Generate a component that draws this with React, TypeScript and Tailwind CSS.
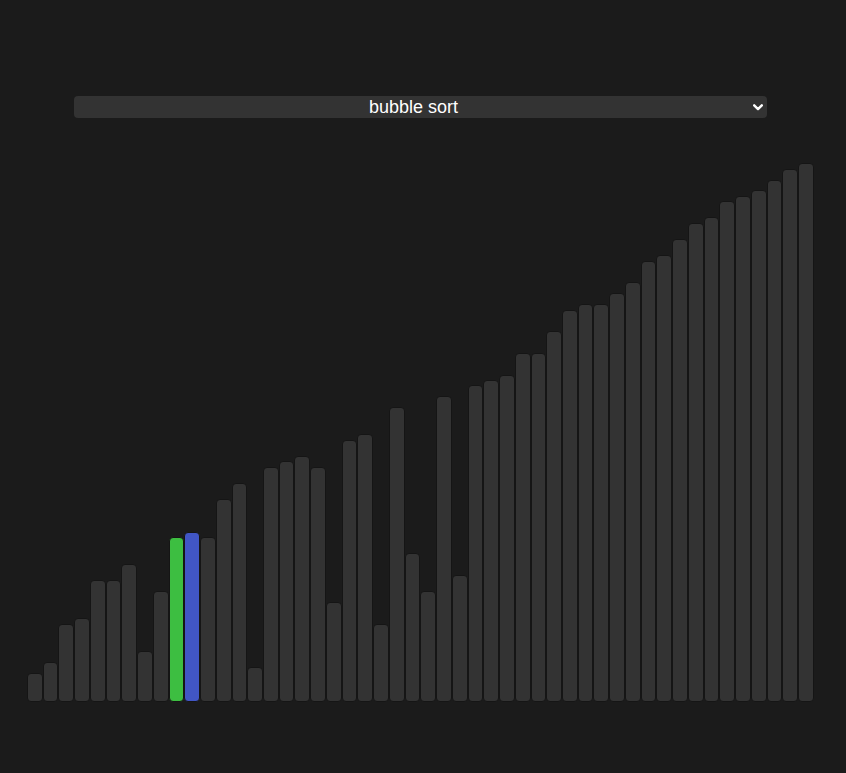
import React from 'react';

const heights = [
  27, 38, 76, 82, 120, 120, 136, 49, 109, 163,
  168, 163, 201, 217, 33, 233, 239, 244, 233, 98,
  260, 266, 76, 293, 147, 109, 304, 125, 315, 320,
  325, 347, 347, 369, 390, 396, 396, 407, 418, 439,
  445, 461, 477, 483, 499, 504, 510, 520, 531, 537,
];

// index 9 is being compared (green), index 10 is the current pivot (blue)
const barColor = (i: number) => {
  if (i === 9) return 'bg-[#3dbe41]';
  if (i === 10) return 'bg-[#4156c5]';
  return 'bg-[#333333]';
};

export default function App() {
  return (
    <div className="min-h-screen bg-[#1b1b1b] font-['Liberation_Sans',Arial,sans-serif]">
      <div className="w-[787px] ml-[27px] pt-[96px]">
        <div className="px-[47px]">
          <div className="relative">
            <select
              defaultValue="bubble"
              className="block w-full h-[22px] appearance-none rounded-[4px] bg-[#333333] pr-[14px] text-white text-[18px] leading-[22px] text-center border-0 outline-none"
            >
              <option value="bubble">bubble sort</option>
              <option value="insertion">insertion sort</option>
              <option value="selection">selection sort</option>
              <option value="quick">quick sort</option>
              <option value="merge">merge sort</option>
            </select>
            <svg
              className="pointer-events-none absolute right-[4px] top-[8px]"
              width="10"
              height="7"
              viewBox="0 0 10 7"
              fill="none"
            >
              <path d="M1.2 1.3 L5 5.1 L8.8 1.3" stroke="white" strokeWidth="2.4" strokeLinecap="round" strokeLinejoin="round" />
            </svg>
          </div>
        </div>

        <div className="flex items-end h-[542px] mt-[42px]">
          {heights.map((h, i) => (
            <div
              key={i}
              className={`flex-1 rounded-[4px] border border-[#151515] ${barColor(i)}`}
              style={{ height: h + 2 }}
            />
          ))}
        </div>
      </div>
    </div>
  );
}
